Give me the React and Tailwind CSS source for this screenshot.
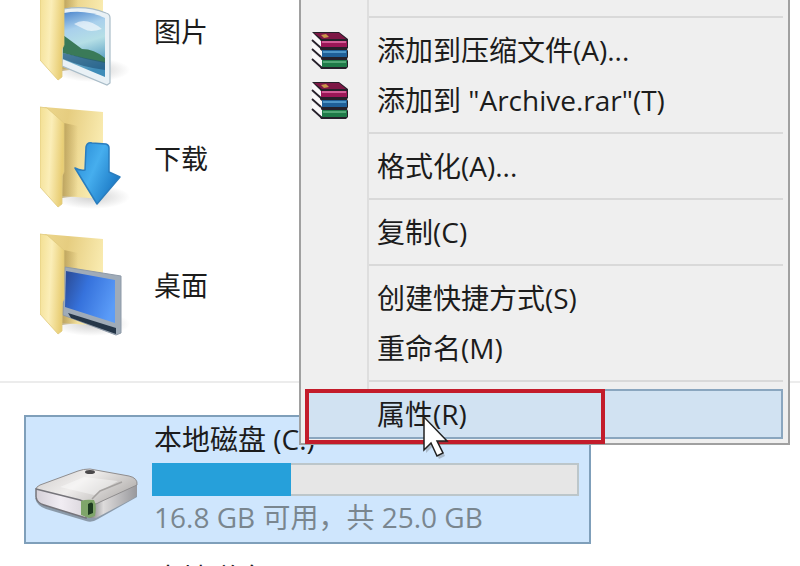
import React from "react";

function FolderFront() {
  return <path d="M0 1 L7 2 L24 17 V66 L22 70 V98 L18 101 L0 81 Z" fill="url(#folderFront)" stroke="#e0c97c" strokeWidth="0.8" />;
}

function FolderIcon({ children }) {
  return (
    <svg viewBox="0 0 90 112" className="h-[112px] w-[90px] shrink-0" aria-hidden="true">
      <defs>
        <linearGradient id="folderBack" x1="0" x2="1" y1="0" y2="0.3">
          <stop offset="0" stopColor="#ecd68c" />
          <stop offset="0.4" stopColor="#e6cd80" />
          <stop offset="1" stopColor="#f9ebb0" />
        </linearGradient>
        <linearGradient id="folderFold" x1="0" x2="1">
          <stop offset="0" stopColor="#a48a48" stopOpacity="0.65" />
          <stop offset="1" stopColor="#a48a48" stopOpacity="0" />
        </linearGradient>
        <linearGradient id="folderFront" x1="0" x2="1" y1="0" y2="0.2">
          <stop offset="0" stopColor="#f3df92" />
          <stop offset="0.5" stopColor="#fbeeb8" />
          <stop offset="1" stopColor="#e8cd74" />
        </linearGradient>
        <linearGradient id="photo" x1="0" x2="0.2" y1="0" y2="1">
          <stop offset="0" stopColor="#4a84cc" />
          <stop offset="0.3" stopColor="#a9d0ec" />
          <stop offset="0.55" stopColor="#b5dfe6" />
          <stop offset="1" stopColor="#3f8cb8" />
        </linearGradient>
        <linearGradient id="arrow" x1="0" x2="1" y1="0" y2="0.6">
          <stop offset="0" stopColor="#2486d2" />
          <stop offset="0.5" stopColor="#46aeee" />
          <stop offset="1" stopColor="#1b78c4" />
        </linearGradient>
        <linearGradient id="screen" x1="0" x2="1" y1="0.2" y2="0.6">
          <stop offset="0" stopColor="#2c4f9c" />
          <stop offset="0.4" stopColor="#3672dc" />
          <stop offset="1" stopColor="#5b9cf8" />
        </linearGradient>
        <radialGradient id="shade">
          <stop offset="0" stopColor="#777" stopOpacity="0.35" />
          <stop offset="1" stopColor="#777" stopOpacity="0" />
        </radialGradient>
      </defs>
      <g transform="translate(0 3)">
        <ellipse cx="52" cy="91" rx="38" ry="12" fill="url(#shade)" />
        <path d="M4 1 L63 6 V93 L22 90 V20 Z" fill="url(#folderBack)" />
        <path d="M24 17 L38 20 V90 L22 92 Z" fill="url(#folderFold)" />
        {children}
        <FolderFront />
      </g>
    </svg>
  );
}

function PictureArt() {
  return (
    <g transform="translate(0 14)">
      <path d="M24 16 Q46 12 66 20 Q70 21 70 25 V90 L67 92 L22 73 Z" fill="#e9f1f6" stroke="#a9bcc8" strokeWidth="1.2" />
      <path d="M24 20 Q46 16 65 25 V84 L22 66 Z" fill="url(#photo)" />
      <path d="M34 31 Q46 23 62 36 Q50 40 44 36 Z" fill="#fff" opacity="0.6" />
      <path d="M23 42 Q34 50 42 56 Q54 56 65 65 V70 Q44 66 23 60 Z" fill="#3a7a58" />
      <path d="M23 60 Q44 65 65 69 V77 Q42 74 23 66 Z" fill="#24587f" opacity="0.7" />
    </g>
  );
}

function DownloadArt() {
  return (
    <path
      d="M46 41 Q47 36 52 37 L66 38 Q69 39 69 42 V66 L80 71 L57 98 L35 62 Q40 65 45 64 Z"
      fill="url(#arrow)"
      stroke="#2a7dbe"
      strokeWidth="1.5"
      strokeLinejoin="round"
    />
  );
}

function DesktopArt() {
  return (
    <g>
      <path d="M25 34 L81 43 V100 L76 102 L23 82 Z" fill="#9fabb8" stroke="#8e9aa8" />
      <path d="M26 38 L75 47 V90 L25 74 Z" fill="url(#screen)" />
      <path d="M28 80 L76 95 V101 L31 85 Z" fill="#253648" />
    </g>
  );
}

function DriveIcon() {
  return (
    <svg viewBox="0 0 106 56" className="h-[56px] w-[106px] shrink-0" aria-hidden="true">
      <defs>
        <linearGradient id="driveTop" x1="0" x2="1" y1="0" y2="0.5">
          <stop offset="0" stopColor="#cfcccb" />
          <stop offset="0.5" stopColor="#efedec" />
          <stop offset="1" stopColor="#b9b6b4" />
        </linearGradient>
        <linearGradient id="driveSide" x1="0" x2="1">
          <stop offset="0" stopColor="#77787c" />
          <stop offset="0.3" stopColor="#dddbdb" />
          <stop offset="1" stopColor="#98989c" />
        </linearGradient>
        <linearGradient id="driveFront" x1="0" x2="1">
          <stop offset="0" stopColor="#d5d0d8" />
          <stop offset="0.5" stopColor="#f1edf3" />
          <stop offset="1" stopColor="#dad6dc" />
        </linearGradient>
      </defs>
      <path d="M1 31 Q3 39 12 42 L52 54 Q58 56 64 52 L103 30 V22 L58 42 Z" fill="#5d6772" opacity="0.6" />
      <path d="M58 36 L103 15 V27 Q103 29 100 31 L62 51 L55 51 Z" fill="url(#driveSide)" />
      <path d="M2 22 Q2 20 6 18 L44 4 Q49 2 56 2 L95 9 Q104 11 103 18 L66 35 Q60 39 53 36 L6 24 Z" fill="url(#driveTop)" stroke="#8f8d8e" />
      <path d="M26 20 L50 10 L84 14 L60 28 Z" fill="#fff" opacity="0.4" />
      <path d="M58 32 L66 24 L88 15" stroke="#a5a2a0" strokeWidth="1.5" fill="none" />
      <path d="M2 22 L46 33 Q52 35 52 40 V51 L10 38 Q3 36 2 30 Z" fill="url(#driveFront)" stroke="#75747a" strokeWidth="1.5" />
      <path d="M47 34 Q52 32 60 33 Q63 38 61 49 L55 51 L47 48 Z" fill="#7fa56a" />
      <path d="M54 37 Q58 34 59 37 V46 L54 48 Z" fill="#1d3a20" />
      <ellipse cx="56" cy="5" rx="5" ry="2" fill="#4a484a" />
    </svg>
  );
}

function ArchiveIcon() {
  return (
    <svg viewBox="-1 -1 38 38" className="h-[38px] w-[38px]" aria-hidden="true">
      <path d="M0 0 H27 L36 7 V16 L35 17 L36 19 V25 L35 27 L36 29 V35 L34 37 H9 L8 35 L9 27 L8 17 L8 8 Z" fill="#26202a" />
      <path d="M2 1 H27 L34 7 H10 Z" fill="#7d1745" />
      <path d="M9 3 L14 2 L17 5 L12 6 Z" fill="#c9974a" />
      <path d="M9 9 H35 V15 H9 Z" fill="#9c1757" />
      <path d="M10 9 H34 V11 H10 Z" fill="#d45c97" />
      <path d="M10 18 H35 V25 H10 Z" fill="#1f5f98" />
      <path d="M11 19 H34 V21 H11 Z" fill="#4f96c8" />
      <path d="M10 28 H35 V35 H10 Z" fill="#1f7a48" />
      <path d="M11 29 H34 V31 H11 Z" fill="#55a877" />
      <path d="M0 1 L9 9 V16 L0 8 Z M0 11 L10 19 V25 L0 17 Z M0 20 L10 28 V35 L0 27 Z" fill="#faf9fa" />
      <path d="M0 8 L9 16 M0 17 L9 25 M0 27 L10 36" stroke="#26202a" strokeWidth="1.8" />
    </svg>
  );
}

const folders = [
  { name: "图片", art: <PictureArt /> },
  { name: "下载", art: <DownloadArt /> },
  { name: "桌面", art: <DesktopArt /> },
];

const groups = [
  [
    { label: "添加到压缩文件(A)...", icon: true },
    { label: '添加到 "Archive.rar"(T)', icon: true },
  ],
  [{ label: "格式化(A)..." }],
  [{ label: "复制(C)" }],
  [{ label: "创建快捷方式(S)" }, { label: "重命名(M)" }],
  [{ label: "属性(R)", active: true }],
];

function Drive({ name, detail, used, total, selected }) {
  const look = selected ? "border-[#7f9fba] bg-[#cfe6fd]" : "border-transparent";
  return (
    <button type="button" className={`flex h-[129px] w-full shrink-0 border-2 px-2 text-left ${look}`}>
      <span className="mt-[50px]">
        <DriveIcon />
      </span>
      <span className="ml-3 flex min-w-0 flex-1 flex-col pt-1">
        <span className="h-[42px] pl-0.5 leading-9">{name}</span>
        <meter className="sr-only" min="0" max={total} value={used} aria-label={name} />
        <span className="mr-0.5 flex h-[33px] border-2 border-[#bcc6ca] bg-[#e6e6e6]">
          <span className="-my-0.5 -ml-0.5 bg-[#26a0da]" style={{ width: `${(used / total) * 100}%` }} />
        </span>
        <span className="pl-0.5 leading-[42px] text-[#7a868f]">{detail}</span>
      </span>
    </button>
  );
}

function MenuItem({ label, icon, active }) {
  const look = active ? "border-[#8aa6bf] bg-[#d1e2f2]" : "border-transparent";
  return (
    <button type="button" role="menuitem" className={`relative flex h-[50px] w-full items-center border-2 text-left ${look}`}>
      <span className="flex w-[70px] shrink-0 pl-1">{icon && <ArchiveIcon />}</span>
      <span className="whitespace-nowrap">{label}</span>
      {active && <span className="absolute -top-0.5 -left-0.5 h-[55px] w-[300px] border-4 border-[#c31c2b]" />}
    </button>
  );
}

function ContextMenu() {
  return (
    <div role="menu" className="absolute top-0 right-[10px] left-[299px] border-x-2 border-b-2 border-[#a0a0a0] bg-[#efefef] pt-[9px] pr-[5px] pb-1 pl-1 text-[28px]">
      <div className="absolute top-0 bottom-1.5 left-[66px] w-0.5 bg-[#dedede]" />
      {groups.map((items, i) => (
        <React.Fragment key={i}>
          <div role="separator" className="flex h-4 items-center pl-16">
            <div className="h-0.5 w-full bg-[#d9d9d9]" />
          </div>
          {items.map((item) => (
            <MenuItem key={item.label} {...item} />
          ))}
        </React.Fragment>
      ))}
    </div>
  );
}

export default function App() {
  return (
    <div className="relative h-screen overflow-hidden bg-white font-['Open_Sans','Noto_Sans_CJK_SC',sans-serif] text-[27px] leading-9 text-[#1c1c1c]">
      <main>
        <ul className="-mt-8">
          {folders.map((f) => (
            <li key={f.name} className="flex h-[127px] items-center gap-6 pl-10">
              <FolderIcon>{f.art}</FolderIcon>
              <span>{f.name}</span>
            </li>
          ))}
        </ul>
        <hr className="my-8 border-t-2 border-[#ececec]" />
        <section className="mr-[209px] ml-6 flex flex-col gap-2.5 text-[28px]">
          <Drive name="本地磁盘 (C:)" detail="16.8 GB 可用，共 25.0 GB" used={8.2} total={25} selected />
          <Drive name="本地磁盘 (D:)" detail="" used={0} total={25} />
        </section>
      </main>
      <ContextMenu />
      <svg viewBox="0 0 28 44" className="absolute top-[415px] left-[422px] h-[44px] w-[28px]" aria-hidden="true">
        <path d="M4 5 V38 L11 31 L17 44 L23 41 L17 28 H27 Z" fill="#555" opacity="0.3" />
        <path d="M2 2 V35 L9 28 L15 41 L21 38 L15 26 H25 Z" fill="#fff" stroke="#222" strokeWidth="1.5" />
      </svg>
    </div>
  );
}
